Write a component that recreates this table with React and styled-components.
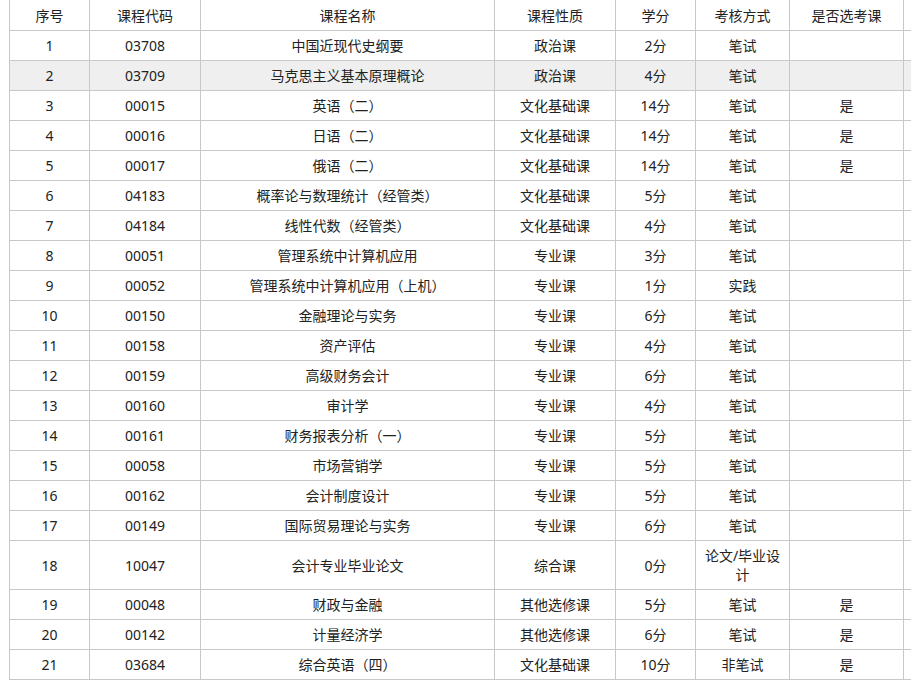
import React from "react";
import styled, { createGlobalStyle } from "styled-components";

const courses = [
  ["1", "03708", "中国近现代史纲要", "政治课", "2分", "笔试", ""],
  ["2", "03709", "马克思主义基本原理概论", "政治课", "4分", "笔试", ""],
  ["3", "00015", "英语（二）", "文化基础课", "14分", "笔试", "是"],
  ["4", "00016", "日语（二）", "文化基础课", "14分", "笔试", "是"],
  ["5", "00017", "俄语（二）", "文化基础课", "14分", "笔试", "是"],
  ["6", "04183", "概率论与数理统计（经管类）", "文化基础课", "5分", "笔试", ""],
  ["7", "04184", "线性代数（经管类）", "文化基础课", "4分", "笔试", ""],
  ["8", "00051", "管理系统中计算机应用", "专业课", "3分", "笔试", ""],
  ["9", "00052", "管理系统中计算机应用（上机）", "专业课", "1分", "实践", ""],
  ["10", "00150", "金融理论与实务", "专业课", "6分", "笔试", ""],
  ["11", "00158", "资产评估", "专业课", "4分", "笔试", ""],
  ["12", "00159", "高级财务会计", "专业课", "6分", "笔试", ""],
  ["13", "00160", "审计学", "专业课", "4分", "笔试", ""],
  ["14", "00161", "财务报表分析（一）", "专业课", "5分", "笔试", ""],
  ["15", "00058", "市场营销学", "专业课", "5分", "笔试", ""],
  ["16", "00162", "会计制度设计", "专业课", "5分", "笔试", ""],
  ["17", "00149", "国际贸易理论与实务", "专业课", "6分", "笔试", ""],
  ["18", "10047", "会计专业毕业论文", "综合课", "0分", "论文/毕业设计", ""],
  ["19", "00048", "财政与金融", "其他选修课", "5分", "笔试", "是"],
  ["20", "00142", "计量经济学", "其他选修课", "6分", "笔试", "是"],
  ["21", "03684", "综合英语（四）", "文化基础课", "10分", "非笔试", "是"],
];

const headers = ["序号", "课程代码", "课程名称", "课程性质", "学分", "考核方式", "是否选考课"];
const widths = [80, 111, 294, 121, 80, 94, 114, 60];

const GlobalStyle = createGlobalStyle`
  html, body {
    margin: 0;
    padding: 0;
    background: #ffffff;
    overflow: hidden;
  }
  body {
    font-family: "Noto Sans", "Noto Sans CJK SC", sans-serif;
    color: #222222;
  }
`;

const Page = styled.div`
  padding-left: 9px;
  margin-top: -1px;
`;

const Table = styled.table`
  border-collapse: collapse;
  table-layout: fixed;
  width: ${widths.reduce((a, b) => a + b, 0)}px;
  font-size: 14px;
  line-height: 19px;
`;

const Cell = styled.td`
  border: 1px solid #c8c8c8;
  padding: 5px 6px;
  text-align: center;
  vertical-align: middle;
  font-weight: normal;
  word-break: break-all;
`;

const HeadCell = styled(Cell).attrs({ as: "th" })`
  padding-top: 6px;
`;

const Row = styled.tr`
  background: ${(p) => (p.$highlight ? "#efefef" : "#ffffff")};
`;

export default function App() {
  return (
    <Page>
      <GlobalStyle />
      <Table>
        <colgroup>
          {widths.map((w, i) => (
            <col key={i} style={{ width: w }} />
          ))}
        </colgroup>
        <thead>
          <Row>
            {headers.map((h) => (
              <HeadCell key={h}>{h}</HeadCell>
            ))}
            <HeadCell />
          </Row>
        </thead>
        <tbody>
          {courses.map((c) => (
            <Row key={c[0]} $highlight={c[0] === "2"}>
              {c.map((v, i) => (
                <Cell key={i}>{v}</Cell>
              ))}
              <Cell />
            </Row>
          ))}
        </tbody>
      </Table>
    </Page>
  );
}
